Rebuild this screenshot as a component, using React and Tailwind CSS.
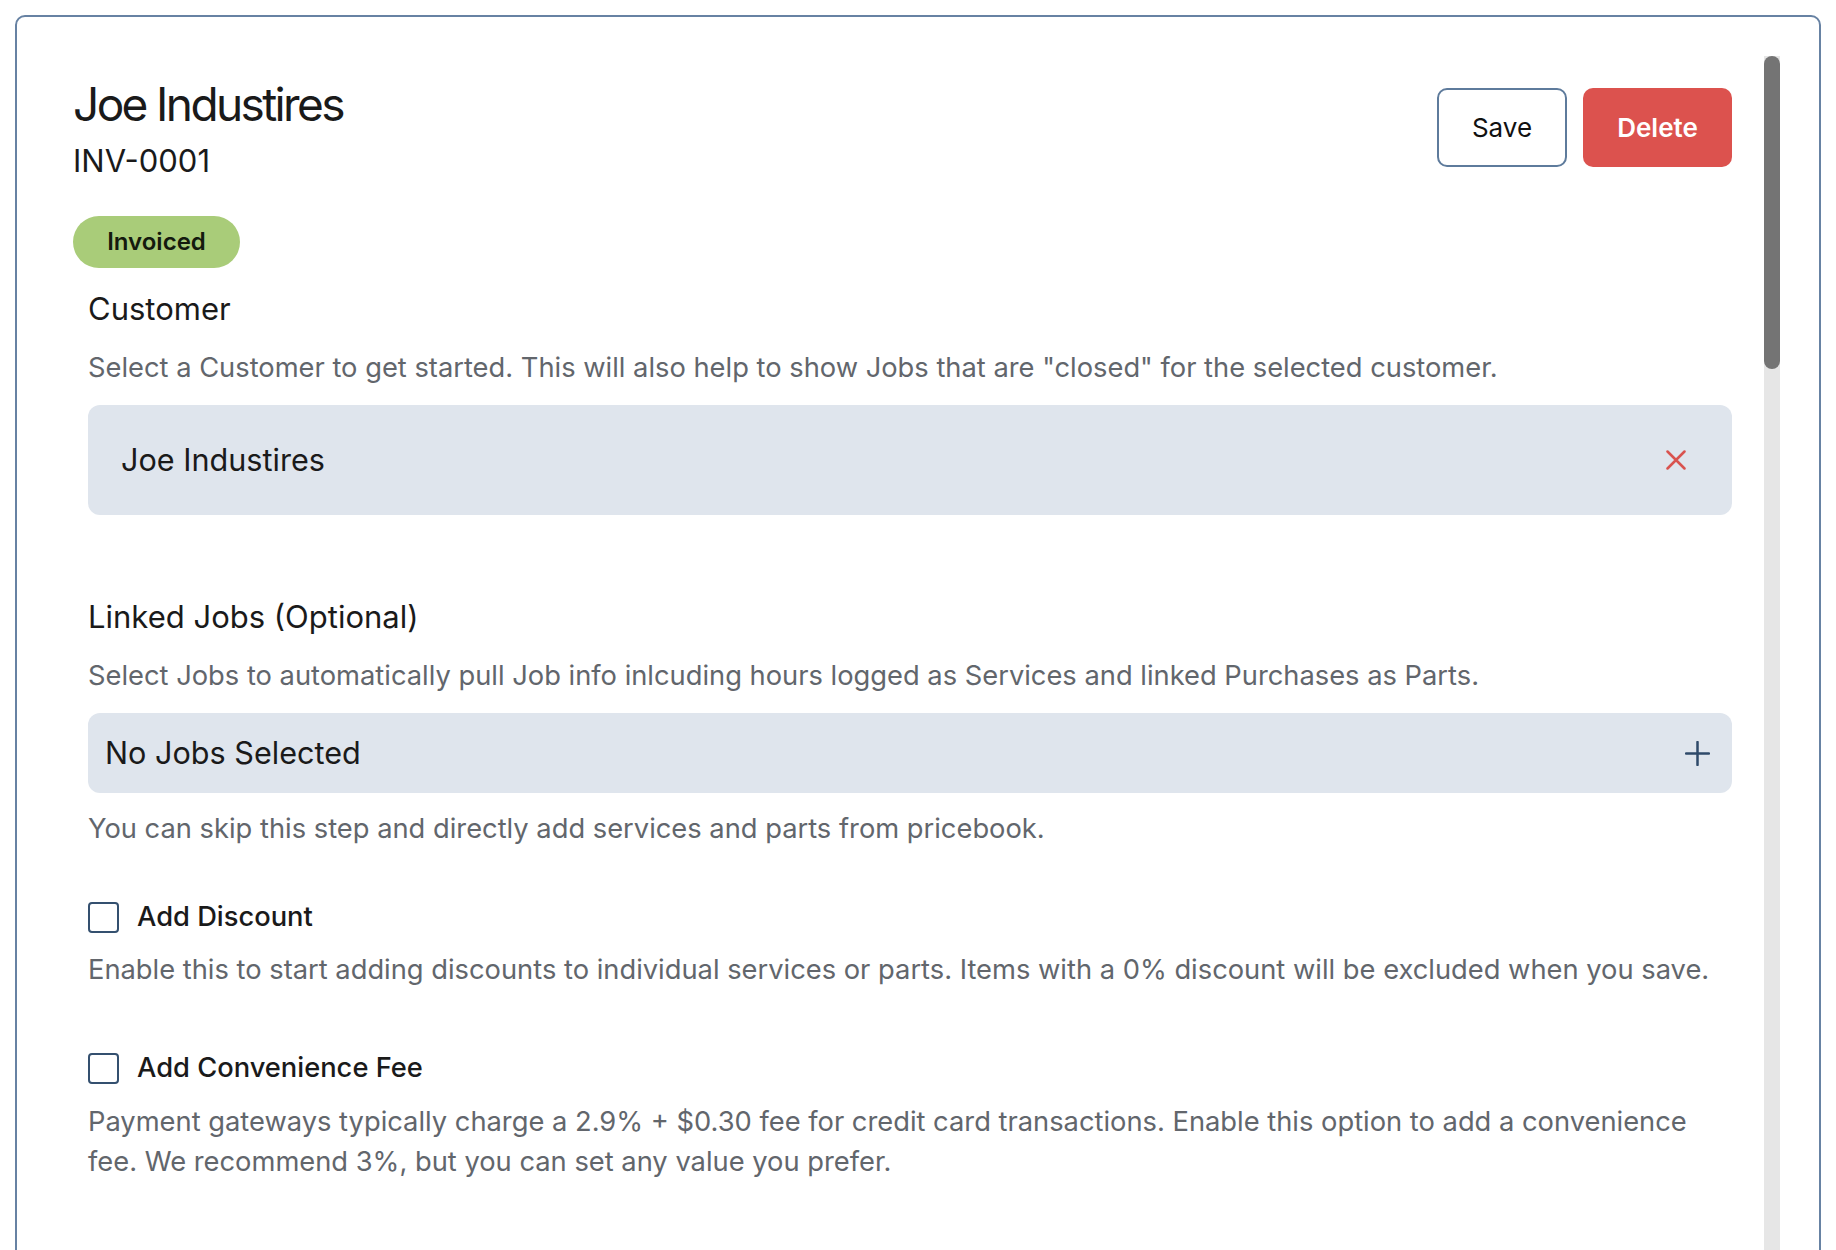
function Checkbox() {
  return <span className="block w-[31px] h-[31px] rounded-[4px] border-2 border-[#34506f] bg-white shrink-0" />;
}

export default function App() {
  return (
    <div className="h-[1250px] overflow-hidden bg-white pt-[15px] pl-[15px] font-['Inter',sans-serif]">
      <div className="w-[1806px] h-[1300px] rounded-[10px] border-2 border-[#6782a3] flex">
        {/* Content */}
        <div className="flex-1 pl-[56px] pr-[32px] pt-[60px]">
          <div className="flex justify-between items-start">
            <div>
              <h1 className="text-[46px] leading-[55px] tracking-[-0.057em] text-[#1a1a1a]">Joe Industires</h1>
              <p className="mt-[11px] text-[31px] leading-[36px] text-[#1a1a1a]">INV-0001</p>
              <span className="mt-[37px] inline-flex items-center justify-center w-[167px] h-[52px] rounded-full bg-[#a9cc79] text-[24px] font-semibold text-[#141a0e]">
                Invoiced
              </span>
            </div>
            <div className="mt-[11px] flex gap-[16px]">
              <button className="w-[130px] h-[79px] rounded-[10px] border-2 border-[#5e7b9c] bg-white text-[26px] text-[#111]">
                Save
              </button>
              <button className="w-[149px] h-[79px] rounded-[10px] bg-[#dc524e] text-[26px] font-semibold text-white">
                Delete
              </button>
            </div>
          </div>

          <div className="pl-[15px]">
            {/* Customer */}
            <h2 className="mt-[23px] text-[31px] leading-[36px] text-[#1a1a1a]">Customer</h2>
            <p className="mt-[21px] text-[27.3px] leading-[40px] text-[#62666c]">
              Select a Customer to get started. This will also help to show Jobs that are "closed" for the selected customer.
            </p>
            <div className="mt-[17px] h-[110px] rounded-[12px] bg-[#dfe5ed] flex items-center justify-between pl-[33px] pr-[46px]">
              <span className="text-[30.6px] text-[#1a1a1a]">Joe Industires</span>
              <svg width="20" height="20" viewBox="0 0 20 20" className="text-[#d9534f]">
                <path d="M1.5 1.5 L18.5 18.5 M18.5 1.5 L1.5 18.5" stroke="currentColor" strokeWidth="2.5" strokeLinecap="round" />
              </svg>
            </div>

            {/* Linked jobs */}
            <h2 className="mt-[84px] text-[31px] leading-[36px] text-[#1a1a1a]">Linked Jobs (Optional)</h2>
            <p className="mt-[21px] text-[27.3px] leading-[40px] text-[#62666c]">
              Select Jobs to automatically pull Job info inlcuding hours logged as Services and linked Purchases as Parts.
            </p>
            <div className="mt-[17px] h-[80px] rounded-[12px] bg-[#dfe5ed] flex items-center justify-between pl-[17px] pr-[22px]">
              <span className="text-[30.6px] text-[#1a1a1a]">No Jobs Selected</span>
              <svg width="25" height="25" viewBox="0 0 25 25" className="text-[#2f4a6a]">
                <path d="M12.5 1 V24 M1 12.5 H24" stroke="currentColor" strokeWidth="2.5" strokeLinecap="round" />
              </svg>
            </div>
            <p className="mt-[16px] text-[27.3px] leading-[40px] text-[#62666c]">
              You can skip this step and directly add services and parts from pricebook.
            </p>

            {/* Discount */}
            <label className="mt-[48px] flex items-center gap-[18px]">
              <Checkbox />
              <span className="text-[27.3px] font-medium text-[#1a1a1a]">Add Discount</span>
            </label>
            <p className="mt-[12px] text-[27.3px] leading-[40px] text-[#62666c]">
              Enable this to start adding discounts to individual services or parts. Items with a 0% discount will be excluded when you save.
            </p>

            {/* Convenience fee */}
            <label className="mt-[58px] flex items-center gap-[18px]">
              <Checkbox />
              <span className="text-[27.3px] font-medium text-[#1a1a1a]">Add Convenience Fee</span>
            </label>
            <p className="mt-[13px] text-[27.3px] leading-[40px] text-[#62666c]">
              Payment gateways typically charge a 2.9% + $0.30 fee for credit card transactions. Enable this option to add a convenience fee. We recommend 3%, but you can set any value you prefer.
            </p>
          </div>
        </div>

        {/* Scrollbar */}
        <div className="w-[16px] mt-[39px] mr-[39px] bg-[#e6e6e6] shrink-0">
          <div className="h-[313px] rounded-full bg-[#747474]" />
        </div>
      </div>
    </div>
  );
}
